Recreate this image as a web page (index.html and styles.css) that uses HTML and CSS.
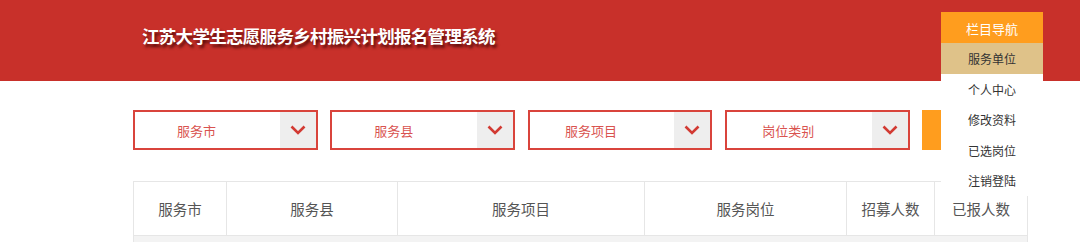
FILE: index.html
```html
<!DOCTYPE html>
<html lang="zh-CN">
<head>
  <meta charset="UTF-8" />
  <title>江苏大学生志愿服务乡村振兴计划报名管理系统</title>
  <link rel="stylesheet" href="styles.css">
</head>
<body>
  <div class="topo">
    <h1 class="titulo">江苏大学生志愿服务乡村振兴计划报名管理系统</h1>
  </div>

  <div class="menu-nav">
    <div class="menu-topo">栏目导航</div>
    <a href="#" class="menu-item ativo">服务单位</a>
    <a href="#" class="menu-item">个人中心</a>
    <a href="#" class="menu-item">修改资料</a>
    <a href="#" class="menu-item">已选岗位</a>
    <a href="#" class="menu-item">注销登陆</a>
  </div>

  <div class="conteudo">
    <div class="filtros">
      <div class="filtro">
        <span class="filtro-texto">服务市</span>
        <span class="filtro-seta"><svg width="16" height="10" viewBox="0 0 16 10"><path d="M1.5 1.5 L8 8 L14.5 1.5" fill="none" stroke="#d23a33" stroke-width="2.6"/></svg></span>
      </div>
      <div class="filtro">
        <span class="filtro-texto">服务县</span>
        <span class="filtro-seta"><svg width="16" height="10" viewBox="0 0 16 10"><path d="M1.5 1.5 L8 8 L14.5 1.5" fill="none" stroke="#d23a33" stroke-width="2.6"/></svg></span>
      </div>
      <div class="filtro">
        <span class="filtro-texto">服务项目</span>
        <span class="filtro-seta"><svg width="16" height="10" viewBox="0 0 16 10"><path d="M1.5 1.5 L8 8 L14.5 1.5" fill="none" stroke="#d23a33" stroke-width="2.6"/></svg></span>
      </div>
      <div class="filtro">
        <span class="filtro-texto">岗位类别</span>
        <span class="filtro-seta"><svg width="16" height="10" viewBox="0 0 16 10"><path d="M1.5 1.5 L8 8 L14.5 1.5" fill="none" stroke="#d23a33" stroke-width="2.6"/></svg></span>
      </div>
      <button class="btn-buscar" aria-label="查询"></button>
    </div>

    <table class="tabela">
      <thead>
        <tr>
          <th class="col-cidade">服务市</th>
          <th class="col-condado">服务县</th>
          <th class="col-projeto">服务项目</th>
          <th class="col-posto">服务岗位</th>
          <th class="col-vagas">招募人数</th>
          <th class="col-inscritos">已报人数</th>
        </tr>
      </thead>
      <tbody>
        <tr class="linha-vazia"><td colspan="6"></td></tr>
      </tbody>
    </table>
  </div>
</body>
</html>
```

FILE: styles.css
```css
:root {
  --vermelho: #c8302a;
  --laranja: #ff9d1e;
  --bege: #dfc289;
  --borda: #e6e6e6;
}

body {
  margin: 0;
  font-family: "Liberation Sans", "Noto Sans CJK SC", sans-serif;
  background: #fff;
  color: #555;
  overflow: hidden;
}

.topo {
  height: 81px;
  background-color: var(--vermelho);
  display: flex;
  align-items: center;
  padding-left: 142px;
  box-sizing: border-box;
}

.titulo {
  margin: 0 0 11px 0;
  font-family: "Noto Sans CJK SC", sans-serif;
  font-size: 17.5px;
  font-weight: 700;
  letter-spacing: -0.7px;
  color: #fff;
  text-shadow: 2px 3px 3px rgba(60, 0, 0, 0.8);
}

.menu-nav {
  position: absolute;
  top: 12px;
  left: 941px;
  width: 102px;
  height: 184px;
  background: #fff;
  z-index: 10;
  font-family: "Noto Sans CJK SC", sans-serif;
  font-size: 12px;
}

.menu-topo {
  height: 31px;
  line-height: 33px;
  text-align: center;
  background: var(--laranja);
  color: #fff;
  font-size: 13px;
}

.menu-item {
  display: block;
  height: 30.5px;
  line-height: 32px;
  text-align: center;
  color: #333;
  text-decoration: none;
}

.menu-item.ativo {
  background: var(--bege);
}

.conteudo {
  width: 894px;
  margin-left: 133px;
}

.filtros {
  display: flex;
  gap: 12.5px;
  margin-top: 29px;
  height: 40px;
}

.filtro {
  width: 185px;
  height: 40px;
  box-sizing: border-box;
  border: 2px solid #d9443c;
  display: flex;
}

.filtro-texto {
  flex: 1;
  display: flex;
  align-items: center;
  justify-content: center;
  padding-right: 22px;
  font-family: "Noto Sans CJK SC", sans-serif;
  font-size: 13px;
  color: #d9534f;
}

.filtro-seta {
  width: 36px;
  background: #eeeeee;
  display: flex;
  align-items: center;
  justify-content: center;
}

.btn-buscar {
  width: 105px;
  height: 40px;
  border: none;
  background: var(--laranja);
}

.tabela {
  width: 894px;
  margin-top: 31px;
  border-collapse: collapse;
  table-layout: fixed;
}

.tabela th {
  height: 53px;
  border: 1px solid var(--borda);
  font-family: "Noto Sans CJK SC", sans-serif;
  font-weight: 400;
  font-size: 14.5px;
  color: #555;
  padding: 0;
}

.col-cidade { width: 92px; }
.col-condado { width: 170px; }
.col-projeto { width: 246px; }
.col-posto { width: 201px; }
.col-vagas { width: 87px; }
.col-inscritos { width: 92px; }

.linha-vazia td {
  height: 20px;
  background: #f3f3f3;
  border: 1px solid var(--borda);
}
```
